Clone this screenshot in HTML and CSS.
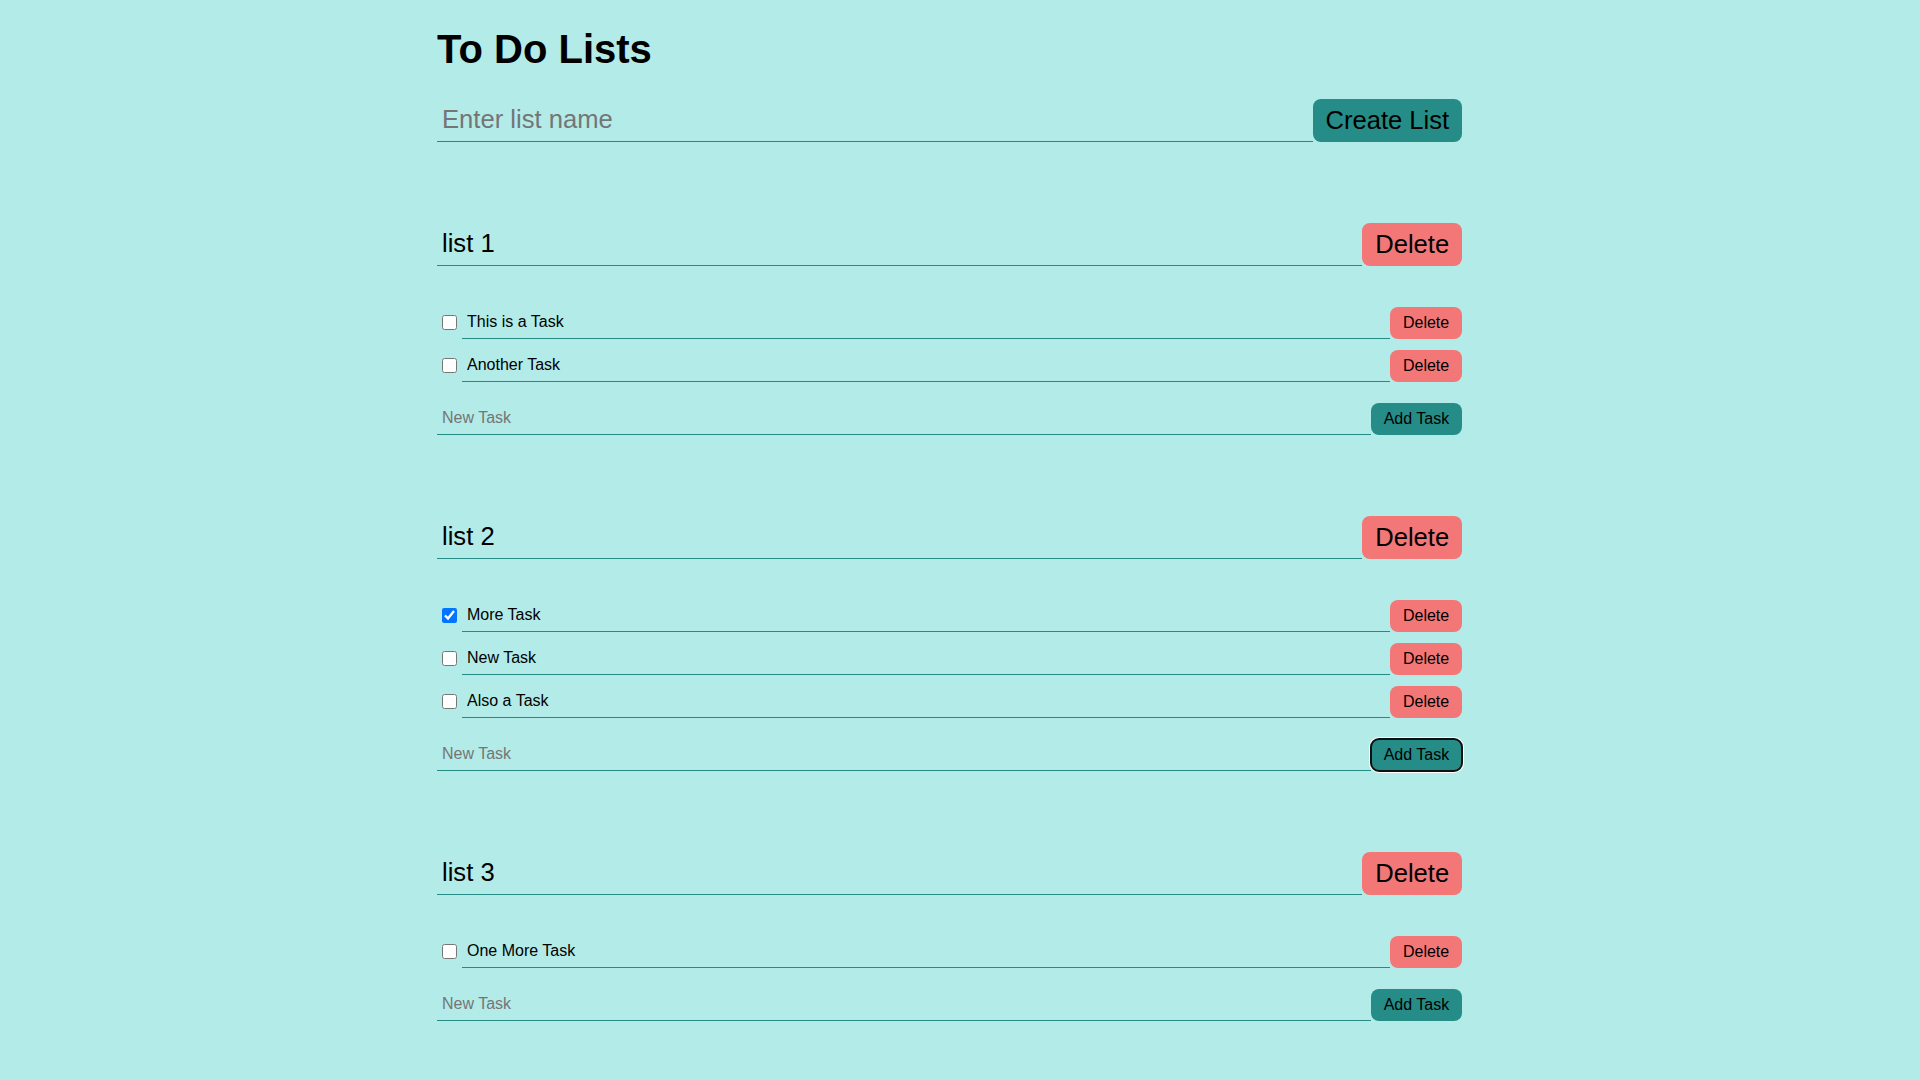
FILE: index.html
```html
<!DOCTYPE html>
<html lang="en">
<head>
<meta charset="utf-8">
<title>To Do Lists</title>
<link rel="stylesheet" href="styles.css">
</head>
<body>
<div class="app">
  <h1 class="title">To Do Lists</h1>
  <form class="row">
    <input class="field field-lg" type="text" placeholder="Enter list name">
    <button type="button" class="btn btn-lg btn-teal">Create List</button>
  </form>

  <section class="list">
    <div class="row list-head">
      <input class="field field-lg" type="text" value="list 1">
      <button type="button" class="btn btn-lg btn-red">Delete</button>
    </div>
    <ul class="tasks">
      <li class="row task">
        <input class="check" type="checkbox">
        <input class="field" type="text" value="This is a Task">
        <button type="button" class="btn btn-red">Delete</button>
      </li>
      <li class="row task">
        <input class="check" type="checkbox">
        <input class="field" type="text" value="Another Task">
        <button type="button" class="btn btn-red">Delete</button>
      </li>
    </ul>
    <div class="row add-row">
      <input class="field" type="text" placeholder="New Task">
      <button type="button" class="btn btn-teal">Add Task</button>
    </div>
  </section>

  <section class="list">
    <div class="row list-head">
      <input class="field field-lg" type="text" value="list 2">
      <button type="button" class="btn btn-lg btn-red">Delete</button>
    </div>
    <ul class="tasks">
      <li class="row task">
        <input class="check" type="checkbox" checked>
        <input class="field" type="text" value="More Task">
        <button type="button" class="btn btn-red">Delete</button>
      </li>
      <li class="row task">
        <input class="check" type="checkbox">
        <input class="field" type="text" value="New Task">
        <button type="button" class="btn btn-red">Delete</button>
      </li>
      <li class="row task">
        <input class="check" type="checkbox">
        <input class="field" type="text" value="Also a Task">
        <button type="button" class="btn btn-red">Delete</button>
      </li>
    </ul>
    <div class="row add-row">
      <input class="field" type="text" placeholder="New Task">
      <button type="button" class="btn btn-teal is-focused">Add Task</button>
    </div>
  </section>

  <section class="list">
    <div class="row list-head">
      <input class="field field-lg" type="text" value="list 3">
      <button type="button" class="btn btn-lg btn-red">Delete</button>
    </div>
    <ul class="tasks">
      <li class="row task">
        <input class="check" type="checkbox">
        <input class="field" type="text" value="One More Task">
        <button type="button" class="btn btn-red">Delete</button>
      </li>
    </ul>
    <div class="row add-row">
      <input class="field" type="text" placeholder="New Task">
      <button type="button" class="btn btn-teal">Add Task</button>
    </div>
  </section>
</div>
</body>
</html>
```

FILE: styles.css
```css
html {
  background: #b3ebe8;
}

body {
  margin: 0 21px 0 0;
  background: #b3ebe8;
  color: #000;
  font-family: "Liberation Sans", Arial, sans-serif;
}

.app {
  width: 1025px;
  margin: 0 auto;
  padding-bottom: 90px;
}

.title {
  font-size: 2.5rem;
  font-weight: bold;
  margin: 0.67em 0;
  line-height: normal;
}

.row {
  display: flex;
  align-items: stretch;
  margin: 0;
}

.field {
  flex: 1;
  min-width: 0;
  margin: 0;
  padding: 0 5px;
  border: none;
  border-bottom: 1px solid #268a85;
  background: transparent;
  color: #000;
  font-family: "Liberation Sans", Arial, sans-serif;
  font-size: 16px;
  outline: none;
}

.field::placeholder {
  color: #757575;
}

.field-lg {
  font-size: 1.6rem;
}

.btn {
  flex: none;
  margin: 0;
  padding: 0 0.8rem;
  border: none;
  border-radius: 8px;
  color: #000;
  font-family: "Liberation Sans", Arial, sans-serif;
  font-size: 16px;
  line-height: 32px;
  cursor: pointer;
}

.btn-lg {
  font-size: 1.6rem;
  line-height: 43px;
}

.btn-teal {
  background: #268c87;
}

.btn-red {
  background: #f37777;
}

.is-focused {
  outline: 2px solid #101010;
  outline-offset: -1px;
  box-shadow: 0 0 0 2px #ffffff;
}

.list {
  margin-top: 81px;
}

.list-head {
  margin-bottom: 41px;
}

.tasks {
  list-style: none;
  margin: 0;
  padding: 0;
  display: flex;
  flex-direction: column;
  gap: 11px;
}

.check {
  flex: none;
  align-self: center;
  width: 15px;
  height: 15px;
  margin: 0 5px;
}

.add-row {
  margin-top: 21px;
}
```
